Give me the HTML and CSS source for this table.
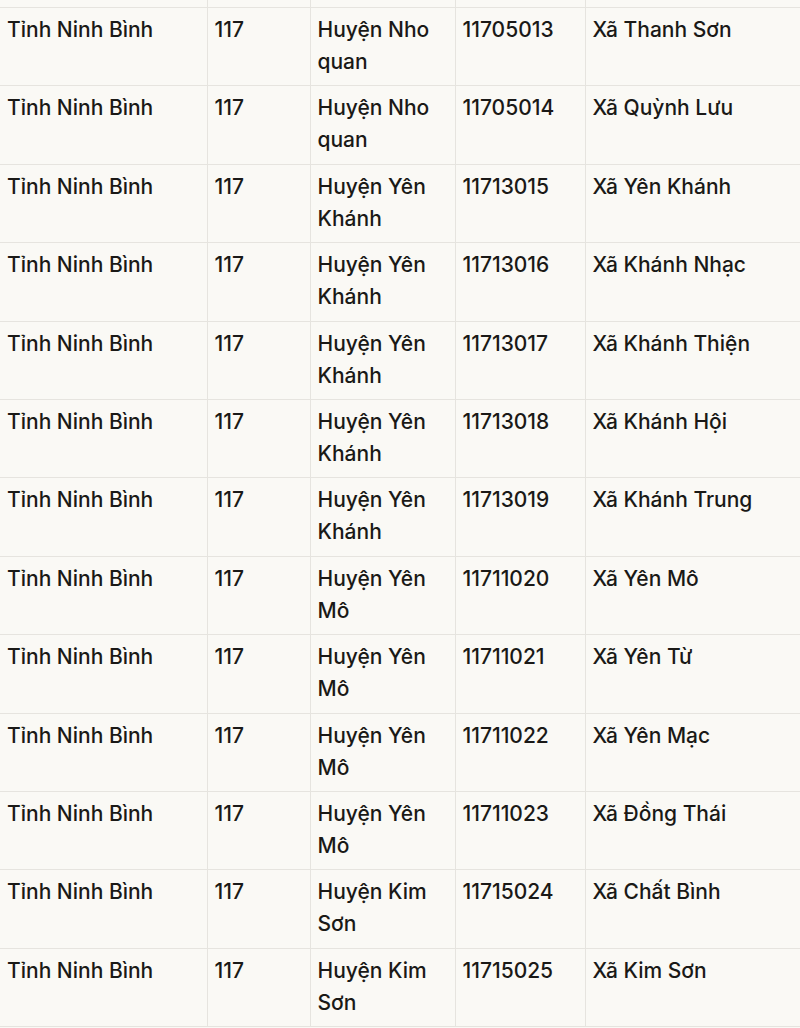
FILE: index.html
```html
<!DOCTYPE html>
<html lang="vi">
<head>
<meta charset="utf-8">
<title>Ninh Bình</title>
<link rel="stylesheet" href="styles.css">
</head>
<body>
<table class="grid">
  <colgroup>
    <col class="c1"><col class="c2"><col class="c3"><col class="c4"><col class="c5">
  </colgroup>
  <tbody>
    <tr class="sliver"><td></td><td></td><td></td><td></td><td></td></tr>
    <tr><td>Tỉnh Ninh Bình</td><td>117</td><td>Huyện Nho quan</td><td>11705013</td><td>Xã Thanh Sơn</td></tr>
    <tr><td>Tỉnh Ninh Bình</td><td>117</td><td>Huyện Nho quan</td><td>11705014</td><td>Xã Quỳnh Lưu</td></tr>
    <tr><td>Tỉnh Ninh Bình</td><td>117</td><td>Huyện Yên Khánh</td><td>11713015</td><td>Xã Yên Khánh</td></tr>
    <tr><td>Tỉnh Ninh Bình</td><td>117</td><td>Huyện Yên Khánh</td><td>11713016</td><td>Xã Khánh Nhạc</td></tr>
    <tr><td>Tỉnh Ninh Bình</td><td>117</td><td>Huyện Yên Khánh</td><td>11713017</td><td>Xã Khánh Thiện</td></tr>
    <tr><td>Tỉnh Ninh Bình</td><td>117</td><td>Huyện Yên Khánh</td><td>11713018</td><td>Xã Khánh Hội</td></tr>
    <tr><td>Tỉnh Ninh Bình</td><td>117</td><td>Huyện Yên Khánh</td><td>11713019</td><td>Xã Khánh Trung</td></tr>
    <tr><td>Tỉnh Ninh Bình</td><td>117</td><td>Huyện Yên Mô</td><td>11711020</td><td>Xã Yên Mô</td></tr>
    <tr><td>Tỉnh Ninh Bình</td><td>117</td><td>Huyện Yên Mô</td><td>11711021</td><td>Xã Yên Từ</td></tr>
    <tr><td>Tỉnh Ninh Bình</td><td>117</td><td>Huyện Yên Mô</td><td>11711022</td><td>Xã Yên Mạc</td></tr>
    <tr><td>Tỉnh Ninh Bình</td><td>117</td><td>Huyện Yên Mô</td><td>11711023</td><td>Xã Đồng Thái</td></tr>
    <tr><td>Tỉnh Ninh Bình</td><td>117</td><td>Huyện Kim Sơn</td><td>11715024</td><td>Xã Chất Bình</td></tr>
    <tr><td>Tỉnh Ninh Bình</td><td>117</td><td>Huyện Kim Sơn</td><td>11715025</td><td>Xã Kim Sơn</td></tr>
  </tbody>
</table>
</body>
</html>
```

FILE: styles.css
```css
html, body {
  margin: 0;
  padding: 0;
  background: #faf9f5;
}
body {
  font-family: Inter, "Noto Sans", sans-serif;
  color: #1a1917;
  overflow: hidden;
}
.grid {
  border-collapse: collapse;
  table-layout: fixed;
  width: 800px;
  font-size: 21px;
  font-weight: 500;
  line-height: 32px;
}
.c1 { width: 207px; }
.c2 { width: 103px; }
.c3 { width: 145px; }
.c4 { width: 130px; }
.c5 { width: 215px; }
.grid td {
  border-left: 1px solid #e6e4df;
  border-bottom: 1px solid #e6e4df;
  vertical-align: top;
  padding: 6px 7px 7px 7px;
  height: 64.4px;
}
.grid td:first-child {
  border-left: none;
}
.grid .sliver td {
  height: 7px;
  padding: 0;
}
```
